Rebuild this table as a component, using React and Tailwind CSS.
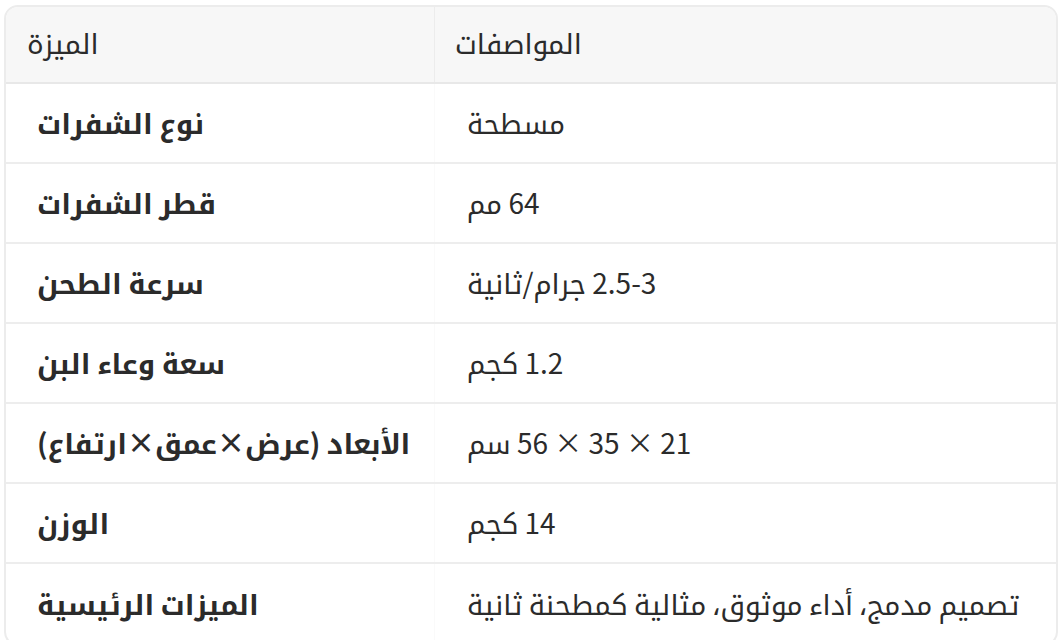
import React from "react";

const rows = [
  ["نوع الشفرات", "مسطحة"],
  ["قطر الشفرات", "64 مم"],
  ["سرعة الطحن", "2.5-3 جرام/ثانية"],
  ["سعة وعاء البن", "1.2 كجم"],
  ["الأبعاد (عرض×عمق×ارتفاع)", "21 × 35 × 56 سم"],
  ["الوزن", "14 كجم"],
  ["الميزات الرئيسية", "تصميم مدمج، أداء موثوق، مثالية كمطحنة ثانية"],
];

export default function App() {
  return (
    <div className="w-[1060px] h-[640px] bg-white pt-[5px] pl-[4px] pr-[2px]" style={{ fontFamily: '"Noto Sans CJK SC", "Noto Kufi Arabic", sans-serif' }}>
      <div className="w-[1054px] border-2 border-[#ececec] rounded-[14px] overflow-hidden text-[28px] text-[#2b2b2b]">
        <div className="flex h-[77px] bg-[#f7f7f7] border-b-2 border-[#e8e8e8]">
          <div dir="rtl" className="w-[429px] flex items-center pl-[21px] pb-[5px] border-r border-[#ececec]">
            <span className="text-left w-full">الميزة</span>
          </div>
          <div dir="rtl" className="flex-1 flex items-center pl-[20px] pb-[5px]">
            <span className="text-left w-full">المواصفات</span>
          </div>
        </div>
        {rows.map((r, i) => (
          <div key={i} className={"flex h-[80px] " + (i < rows.length - 1 ? "border-b-2 border-[#ededed]" : "")}>
            <div dir="rtl" className="w-[429px] flex items-center pl-[31px] pb-[2px] border-r border-[#fafafa] font-bold">
              <span className="text-left w-full">{r[0]}</span>
            </div>
            <div dir="rtl" className="flex-1 flex items-center pl-[32px] pb-[2px]">
              <span className="text-left w-full">{r[1]}</span>
            </div>
          </div>
        ))}
      </div>
    </div>
  );
}
